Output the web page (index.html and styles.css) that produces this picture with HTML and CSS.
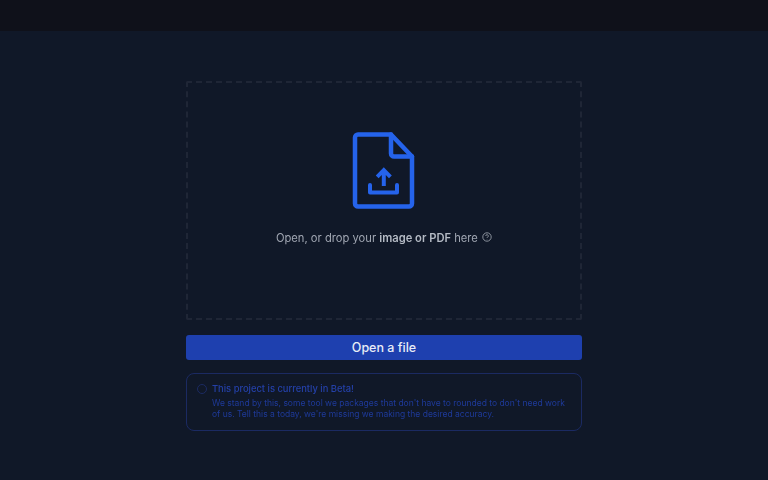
FILE: index.html
```html
<!DOCTYPE html>
<html lang="en">
<head>
<meta charset="utf-8">
<title>Upload</title>
<link rel="stylesheet" href="styles.css">
</head>
<body>
<header class="topbar"></header>
<main class="main">
  <section class="drop">
    <svg class="file-icon" width="64" height="78" viewBox="0 0 64 78" fill="none" stroke="#2563eb" stroke-width="4.5" stroke-linejoin="round" stroke-linecap="round" aria-hidden="true">
      <path d="M3 5.500a3 3 0 0 1 3-3h33l21 22v47a3 3 0 0 1-3 3H6a3 3 0 0 1-3-3z"/>
      <path d="M39 2.500v19a3 3 0 0 0 3 3h18"/>
      <g stroke-width="4" stroke-linecap="butt" stroke-linejoin="miter">
        <path d="M31.800 54V39M25.200 44.800 31.800 38.200l6.600 6.600"/>
        <path d="M18 53v7.500h27V53" stroke-linecap="round" stroke-linejoin="round"/>
      </g>
    </svg>
    <p class="drop-text">Open, or drop your <strong>image or PDF</strong> here
      <svg class="help" width="10" height="10" viewBox="0 0 10 10" fill="none" stroke="#a7adb8" stroke-width=".8" aria-hidden="true"><circle cx="5" cy="5" r="4.200"/><path d="M3.700 4a1.300 1.300 0 1 1 1.900 1.150c-.4.2-.6.4-.6.85M5 7.200v.3"/></svg>
    </p>
  </section>
  <button class="open-btn" type="button">Open a file</button>
  <aside class="notice">
    <span class="notice-dot"></span>
    <div class="notice-body">
      <h2 class="notice-title">This project is currently in Beta!</h2>
      <p class="notice-text">We stand by this, some tool we packages that don't have to rounded to don't need work of us. Tell this a today, we're missing we making the desired accuracy.</p>
    </div>
  </aside>
</main>
</body>
</html>
```

FILE: styles.css
```css
* { box-sizing: border-box; }
html, body { margin: 0; height: 100%; }
body {
  background: #101828;
  font-family: Inter, "Liberation Sans", sans-serif;
  overflow: hidden;
}
.topbar { height: 31px; background: #0f111a; }
.main {
  width: 396px;
  margin: 0 auto;
  padding-top: 50px;
  display: flex;
  flex-direction: column;
}
.drop {
  height: 239px;
  border: 2px dashed #1f2636;
  border-radius: 2px;
  display: flex;
  flex-direction: column;
  align-items: center;
  padding-top: 49px;
}
.file-icon { display: block; }
.drop-text {
  margin: 19px 0 0;
  font-size: 11.200px;
  line-height: 18px;
  color: #a0a6b2;
  white-space: nowrap;
  filter: blur(.25px);
}
.drop-text strong { font-weight: 600; color: #b4bac4; }
.help { vertical-align: 0; margin-left: 1px; }
.open-btn {
  margin-top: 15px;
  height: 25px;
  border: 0;
  border-radius: 3px;
  background: #1e40af;
  color: #e8ecf6;
  font: 500 12.500px/26px Inter, "Liberation Sans", sans-serif;
  padding: 0;
}
.notice {
  margin-top: 13px;
  height: 58px;
  border: 1px solid #1b2a62;
  border-radius: 8px;
  padding: 9px 15px 0 10px;
  display: flex;
  gap: 5px;
  color: #1e3a8a;
}
.notice-dot {
  flex: none;
  width: 10px;
  height: 10px;
  margin-top: 1px;
  border: 1px solid #1b2a62;
  border-radius: 50%;
}
.notice-body { min-width: 0; filter: blur(.6px); }
.notice-title {
  margin: 0;
  font-size: 9.400px;
  line-height: 12px;
  font-weight: 500;
  color: #2440a8;
}
.notice-text {
  margin: 3px 0 0;
  font-size: 8.500px;
  line-height: 11px;
  color: #1e3a9a;
}
```
